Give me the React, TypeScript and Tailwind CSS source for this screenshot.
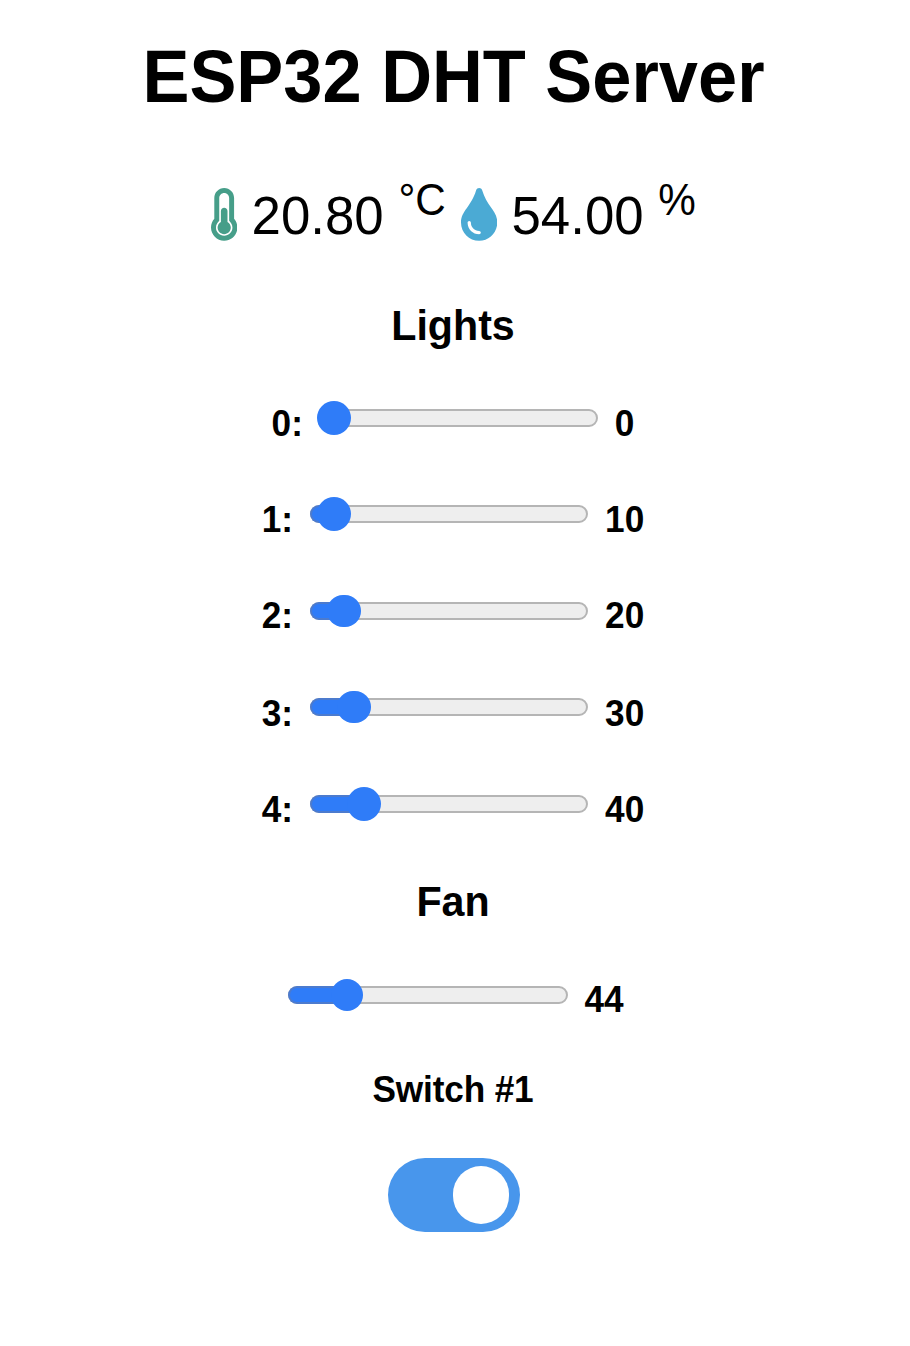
import { FaThermometerHalf, FaTint } from "react-icons/fa";

type SliderProps = {
  name: string;
  track: string;
  fill: string;
  thumb: string;
};

function Slider({ name, track, fill, thumb }: SliderProps) {
  return (
    <div role="slider" aria-label={name} className={`relative flex h-[34px] shrink-0 items-center ${track}`}>
      <div className="h-[18px] w-full overflow-hidden rounded-full border-2 border-[#b5b5b5] bg-[#eeeeee]" />
      <div className={`absolute left-0 top-2 h-[18px] rounded-l-full border-2 border-r-0 border-[#4c7bce] bg-[#2f7cf8] ${fill}`} />
      <div className={`absolute rounded-full bg-[#2f7cf8] ${thumb}`} />
    </div>
  );
}

const lights = [
  { id: 0, value: 0, row: "h-24", track: "w-[278px] mb-3", fill: "hidden", thumb: "left-[-3px] top-0 size-[34px]" },
  { id: 1, value: 10, row: "h-24", track: "w-[278px] mb-3", fill: "w-6", thumb: "left-[7px] top-0 size-[34px]" },
  { id: 2, value: 20, row: "h-24 mb-0.5", track: "w-[278px] mb-2.5", fill: "w-8", thumb: "left-[17px] top-px h-8 w-[34px]" },
  { id: 3, value: 30, row: "h-24", track: "w-[278px] mb-3.5", fill: "w-11", thumb: "left-[27px] top-px h-8 w-[34px]" },
  { id: 4, value: 40, row: "h-24", track: "w-[278px] mb-3", fill: "w-13", thumb: "left-[37px] top-0 size-[34px]" },
];

export default function App() {
  return (
    <main className="flex h-[1346px] w-[906px] flex-col items-center bg-white font-['Liberation_Sans',Arial,sans-serif] text-[35.2px] text-black">
      <h1 className="mt-[38px] h-20 origin-[50%_80%] scale-y-[1.04] whitespace-nowrap pl-px text-[70.4px] font-bold leading-[80px]">
        ESP32 DHT Server
      </h1>

      <section className="mt-[67px] flex h-[60px] items-center whitespace-nowrap pl-[0.8px] text-[52.8px] leading-[60px]">
        <FaThermometerHalf className="mt-[-1px] h-[52.8px] w-[26.4px] text-[#469e89]" />
        <span className="ml-[14.3px] scale-y-[1.03]">20.80</span>
        <span className="mb-7 ml-[14.7px] scale-y-[1.03] text-[42.24px]">°C</span>
        <FaTint className="ml-[15.1px] mt-[-1px] h-[52.8px] w-[36.3px] text-[#4baad4]" />
        <span className="ml-[14.3px] scale-y-[1.03]">54.00</span>
        <span className="mb-7 ml-[14.7px] scale-y-[1.03] text-[42.24px]">%</span>
      </section>

      <h3 className="mt-14 h-12 scale-y-[1.04] text-[41.2px] font-bold leading-[48px]">Lights</h3>

      <section className="mt-[27px] flex flex-col font-bold">
        {lights.map((light) => (
          <div key={light.id} className={`flex items-center justify-center ${light.row}`}>
            <span className="scale-y-[1.04]">{light.id}:</span>
            <span className="ml-[17px] flex">
              <Slider name={`Light ${light.id}`} track={light.track} fill={light.fill} thumb={light.thumb} />
            </span>
            <span className="ml-[17px] scale-y-[1.04]">{light.value}</span>
          </div>
        ))}
      </section>

      <h3 className="mt-[19px] h-12 scale-y-[1.04] text-[41.2px] font-bold leading-[48px]">Fan</h3>

      <section className="mt-[27px] flex h-24 items-center pl-1.5 font-bold">
        <Slider name="Fan" track="w-[280px] mb-2.5" fill="w-15" thumb="left-[43px] top-px size-8" />
        <span className="ml-4 scale-y-[1.04]">44</span>
      </section>

      <h4 className="mt-[22px] h-10 scale-y-[1.04] font-bold leading-10 tracking-[-0.15px]">Switch #1</h4>

      <div role="switch" aria-checked="true" aria-label="Switch #1" className="ml-0.5 mt-12 flex h-[74px] w-[132px] items-center justify-end rounded-full bg-[#4896ec] pr-[11px]">
        <div className="h-[58px] w-14 rounded-full bg-white" />
      </div>
    </main>
  );
}
